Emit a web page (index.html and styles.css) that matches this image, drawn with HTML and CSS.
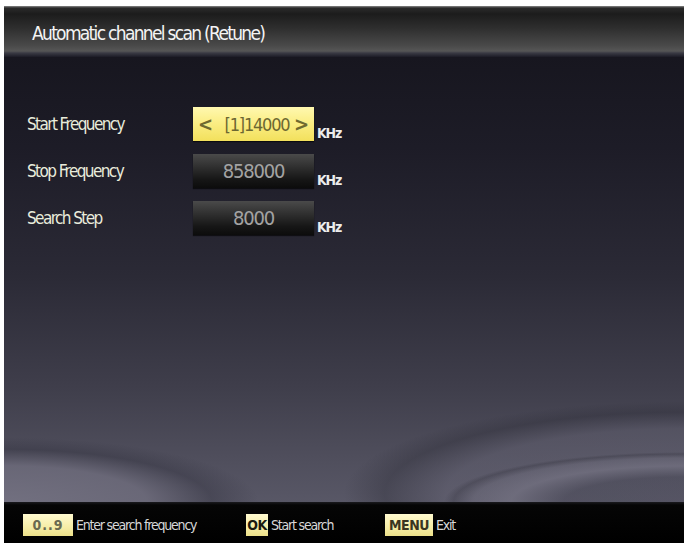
FILE: index.html
```html
<!DOCTYPE html>
<html>
<head>
<meta charset="utf-8">
<link rel="stylesheet" href="styles.css">
</head>
<body>
<div class="screen">
  <div class="titlebar"><span class="title">Automatic channel scan (Retune)</span></div>
  <div class="main">
    <div class="form">
      <div class="label">Start Frequency</div>
      <div class="box box-active"><span class="arrow">&lt;</span><span class="val">[1]14000</span><span class="arrow">&gt;</span></div>
      <div class="unit">KHz</div>

      <div class="label">Stop Frequency</div>
      <div class="box">858000</div>
      <div class="unit">KHz</div>

      <div class="label">Search Step</div>
      <div class="box">8000</div>
      <div class="unit">KHz</div>
    </div>
  </div>
  <div class="footer">
    <div class="hint"><span class="key key-wide">0..9</span><span class="hint-text">Enter search frequency</span></div>
    <div class="hint"><span class="key key-ok">OK</span><span class="hint-text">Start search</span></div>
    <div class="hint"><span class="key key-menu">MENU</span><span class="hint-text">Exit</span></div>
  </div>
</div>
</body>
</html>
```

FILE: styles.css
```css
html, body {
  margin: 0;
  padding: 0;
  background: #ffffff;
}

body {
  font-family: "DejaVu Sans Condensed", "DejaVu Sans", sans-serif;
  font-stretch: condensed;
}

.screen {
  margin: 6px 0 0 4px;
  width: 680px;
  height: 537px;
  display: flex;
  flex-direction: column;
  overflow: hidden;
}

.titlebar {
  height: 51px;
  flex: none;
  display: flex;
  align-items: center;
  padding-left: 28px;
  box-sizing: border-box;
  background: linear-gradient(to bottom, #8a8a8a 0, #2a2a2a 2px, #1c1c1c 8px, #2e2e2e 22px, #4a4a4a 40px, #565656 45px, #3a3a44 47px, #1c1b26 51px);
}

.title {
  color: #f4f4f4;
  font-size: 19px;
  letter-spacing: -1.7px;
  padding-top: 3px;
}

.main {
  flex: 1;
  background:
    radial-gradient(ellipse 260px 66px at 0 100%, rgba(118,116,132,0.85) 0, rgba(112,110,126,0.75) 55%, rgba(45,45,58,0.35) 80%, rgba(45,45,58,0) 98%),
    radial-gradient(ellipse 240px 50px at 100% 100%, rgba(60,60,74,0.3) 0, rgba(60,60,74,0.35) 50%, rgba(118,116,132,0.65) 72%, rgba(118,116,132,0.3) 88%, rgba(40,40,50,0.25) 96%, rgba(40,40,50,0) 100%),
    radial-gradient(ellipse 340px 92px at 100% 98%, rgba(110,108,124,0.4) 0, rgba(105,103,120,0.35) 70%, rgba(40,40,50,0.3) 88%, rgba(40,40,50,0) 100%),
    linear-gradient(to bottom, #17161f 0, #1d1c27 90px, #2b2a36 220px, #3f3e4b 330px, #4f4e5c 400px, #585766 445px);
  padding: 50px 0 0 23px;
  box-sizing: border-box;
}

.form {
  display: grid;
  grid-template-columns: 166px 121px auto;
  grid-auto-rows: 34px;
  row-gap: 13px;
  align-items: center;
}

.label {
  color: #e9ecdc;
  font-size: 17px;
  letter-spacing: -1.6px;
}

.box {
  height: 34px;
  display: flex;
  align-items: center;
  justify-content: center;
  background: linear-gradient(to bottom, #4a4a4a 0, #2e2e2e 40%, #161616 75%, #0c0c0c 100%);
  color: #a3a3a3;
  font-size: 20px;
  letter-spacing: -1.2px;
  box-shadow: 0 1px 1px rgba(0,0,0,0.6);
}

.box-active {
  justify-content: space-between;
  padding: 0 6px 0 5px;
  box-sizing: border-box;
  background: linear-gradient(to bottom, #fff8b0 0, #fbee86 45%, #f2e05c 100%);
  color: #6c6732;
}

.arrow {
  font-size: 20px;
  font-weight: bold;
  color: #6f6a30;
}

.val {
  font-size: 18px;
  letter-spacing: -1.2px;
  padding-left: 8px;
}

.unit {
  align-self: end;
  margin: 0 0 0 3px;
  color: #ececec;
  font-size: 14px;
  font-weight: bold;
  letter-spacing: -1.2px;
  padding-bottom: 0;
}

.footer {
  height: 41px;
  flex: none;
  background: linear-gradient(to bottom, #1a1a1e 0, #050505 3px, #000 100%);
  display: flex;
  align-items: center;
  padding: 4px 0 0 19px;
  box-sizing: border-box;
}

.hint {
  display: flex;
  align-items: center;
}

.hint:nth-child(1) { width: 223px; }
.hint:nth-child(2) { width: 139px; }

.key {
  height: 22px;
  display: flex;
  align-items: center;
  justify-content: center;
  box-sizing: border-box;
  background: linear-gradient(to bottom, #fffad0 0, #f6eda6 60%, #ece08a 100%);
  color: #4a4a30;
  font-size: 14px;
  font-weight: bold;
  letter-spacing: -0.5px;
}

.key-wide { width: 50px; color: #6a6a50; letter-spacing: 1px; }
.key-ok { width: 22px; color: #1a1a10; }
.key-menu { width: 48px; color: #3a3520; }

.hint-text {
  color: #d8d8d8;
  font-size: 14px;
  letter-spacing: -1.2px;
  margin-left: 3px;
}
```
